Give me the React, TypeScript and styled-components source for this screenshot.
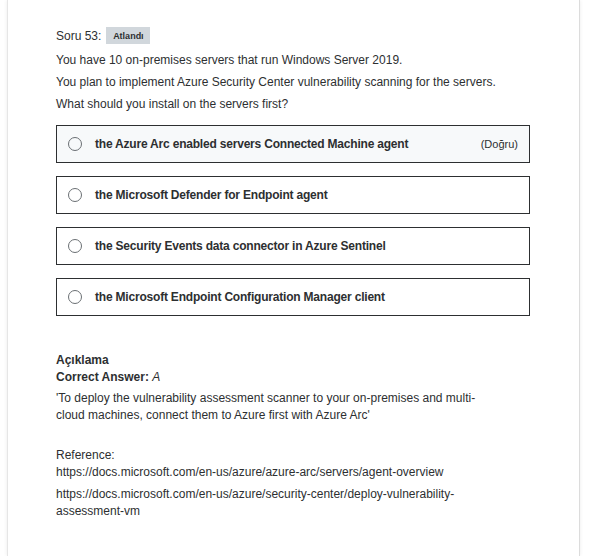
import React from "react";
import styled, { createGlobalStyle } from "styled-components";

const Global = createGlobalStyle`
  html, body { margin: 0; padding: 0; background: #ffffff; }
  body { font-family: "Liberation Sans", Arial, sans-serif; color: #2d2f31; }
`;

const Page = styled.div`
  width: 608px;
  height: 556px;
  overflow: hidden;
  background: #ffffff;
`;

const Card = styled.div`
  margin: 0 28px 0 7px;
  height: 556px;
  box-sizing: border-box;
  background: #ffffff;
  border-left: 1px solid #e6e6e6;
  border-right: 1px solid #dcdcdc;
  box-shadow: 0 0 4px rgba(0, 0, 0, 0.08);
  padding: 27px 0 0 48px;
`;

const Header = styled.div`
  display: flex;
  align-items: center;
  gap: 5px;
  height: 17px;
  font-size: 12px;
`;

const Badge = styled.span`
  display: inline-flex;
  align-items: center;
  justify-content: center;
  width: 44px;
  height: 17px;
  background: #d1d7dc;
  font-size: 9px;
  font-weight: 700;
  color: #2d2f31;
`;

const QuestionLine = styled.div`
  font-size: 12px;
  line-height: 22px;
`;

const Prompt = styled.div`
  margin-top: 5px;
`;

const Options = styled.div`
  display: flex;
  flex-direction: column;
  gap: 13px;
  width: 474px;
  margin-top: 10px;
`;

const Option = styled.div<{ $correct?: boolean }>`
  display: flex;
  align-items: center;
  height: 38px;
  box-sizing: border-box;
  border: 1px solid #2d2f31;
  background: ${(p) => (p.$correct ? "#f7f9fa" : "#ffffff")};
  padding: 0 11px 0 11px;
`;

const Radio = styled.span`
  width: 14px;
  height: 14px;
  box-sizing: border-box;
  border: 1px solid #6a6f73;
  border-radius: 50%;
  flex: none;
  margin-right: 13px;
`;

const OptionText = styled.span`
  flex: 1;
  font-size: 12px;
  font-weight: 700;
  letter-spacing: -0.2px;
`;

const Tag = styled.span`
  font-size: 11px;
`;

const Explanation = styled.div`
  margin-top: 36px;
  width: 440px;
  font-size: 12px;
  line-height: 17px;
`;

const Heading = styled.div`
  font-weight: 700;
`;

const Para = styled.p<{ $gap?: number }>`
  margin: ${(p) => p.$gap ?? 0}px 0 0 0;
  overflow-wrap: anywhere;
`;

const options = [
  "the Azure Arc enabled servers Connected Machine agent",
  "the Microsoft Defender for Endpoint agent",
  "the Security Events data connector in Azure Sentinel",
  "the Microsoft Endpoint Configuration Manager client",
];

export default function App() {
  return (
    <Page>
      <Global />
      <Card>
        <Header>
          <span>Soru 53:</span>
          <Badge>Atlandı</Badge>
        </Header>
        <Prompt>
          <QuestionLine>You have 10 on-premises servers that run Windows Server 2019.</QuestionLine>
          <QuestionLine>You plan to implement Azure Security Center vulnerability scanning for the servers.</QuestionLine>
          <QuestionLine>What should you install on the servers first?</QuestionLine>
        </Prompt>
        <Options>
          {options.map((o, i) => (
            <Option key={o} $correct={i === 0}>
              <Radio />
              <OptionText>{o}</OptionText>
              {i === 0 && <Tag>(Doğru)</Tag>}
            </Option>
          ))}
        </Options>
        <Explanation>
          <Heading>Açıklama</Heading>
          <Heading>
            Correct Answer: <i style={{ fontWeight: 400 }}>A</i>
          </Heading>
          <Para $gap={4}>
            'To deploy the vulnerability assessment scanner to your on-premises and multi-cloud machines, connect them to Azure first with Azure Arc'
          </Para>
          <Para $gap={23}>Reference:</Para>
          <Para>https://docs.microsoft.com/en-us/azure/azure-arc/servers/agent-overview</Para>
          <Para $gap={5}>https://docs.microsoft.com/en-us/azure/security-center/deploy-vulnerability-assessment-vm</Para>
        </Explanation>
      </Card>
    </Page>
  );
}
